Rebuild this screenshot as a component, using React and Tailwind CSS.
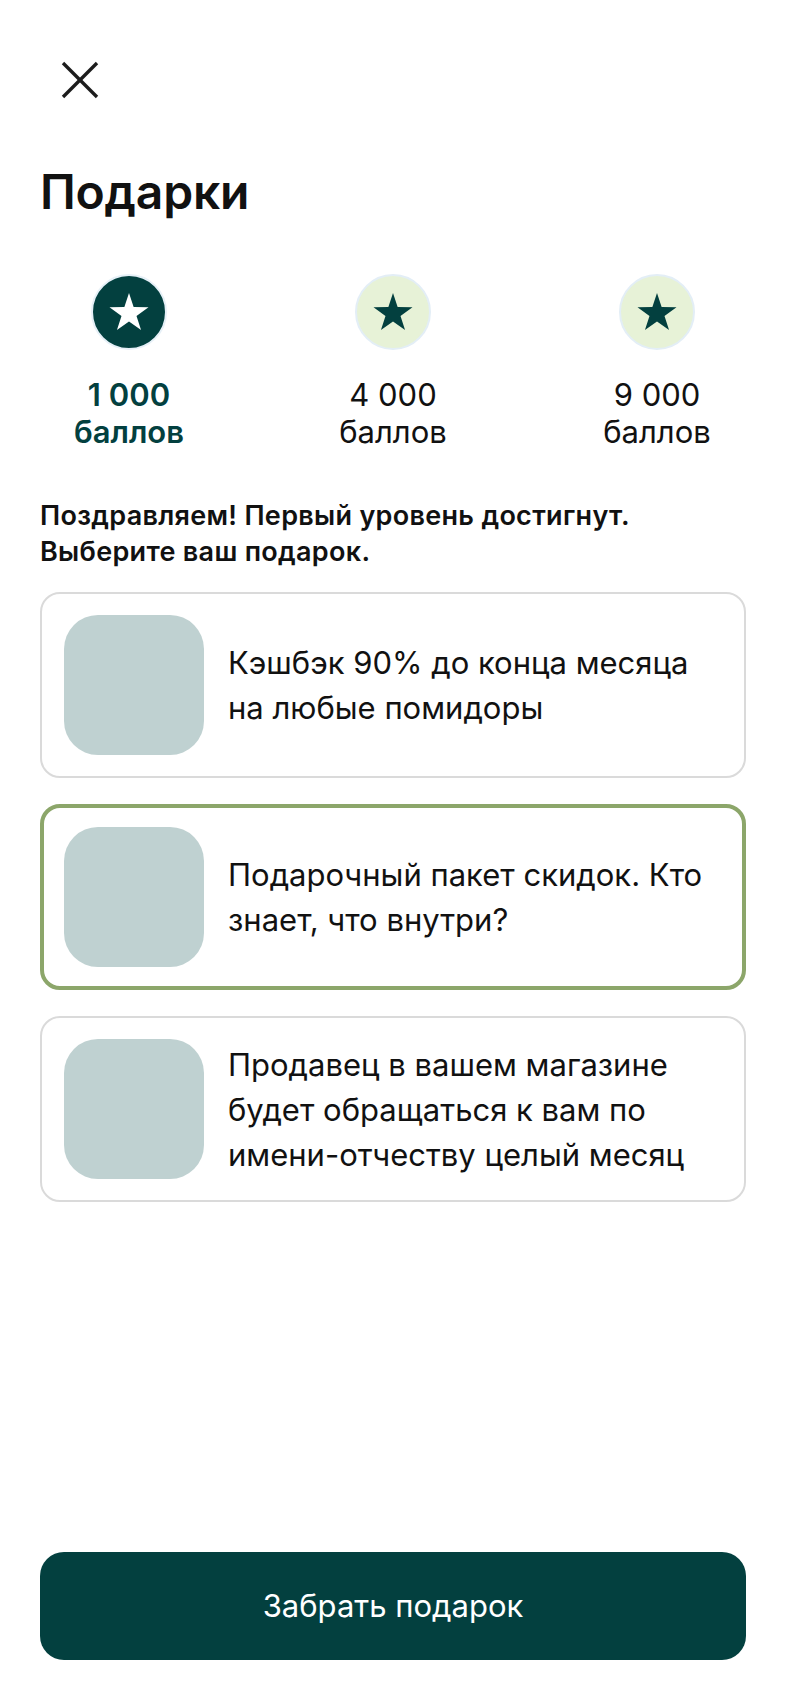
import React from 'react';

const levels = [
    { points: '1 000', active: true },
    { points: '4 000', active: false },
    { points: '9 000', active: false },
];

const gifts = [
    { id: 1, lines: ['Кэшбэк 90% до конца месяца', 'на любые помидоры'] },
    { id: 2, lines: ['Подарочный пакет скидок. Кто', 'знает, что внутри?'] },
    { id: 3, lines: ['Продавец в вашем магазине', 'будет обращаться к вам по', 'имени-отчеству целый месяц'] },
];

// five-point star, tip up
const starPoints = (R, r) => {
    const pts = [];
    for (let i = 0; i < 10; i++) {
        const rad = i % 2 === 0 ? R : r;
        const a = (Math.PI / 5) * i - Math.PI / 2;
        pts.push(`${(rad * Math.cos(a)).toFixed(2)},${(rad * Math.sin(a) + 1.5).toFixed(2)}`);
    }
    return pts.join(' ');
};

const Star = ({ color }) => (
    <svg width="42" height="42" viewBox="-21 -21 42 42">
        <polygon points={starPoints(20.5, 7.9)} fill={color} />
    </svg>
);

const App = () => {
    const selected = 2;

    return (
        <div className="min-h-screen w-full bg-white flex flex-col font-['Inter',sans-serif] text-[#111]">
            <div className="pt-[60px] pl-[60px]">
                <button className="block w-[40px] h-[40px]">
                    <svg width="40" height="40" viewBox="0 0 40 40">
                        <line x1="3" y1="3" x2="37" y2="37" stroke="#1c1c1c" strokeWidth="3.4" />
                        <line x1="37" y1="3" x2="3" y2="37" stroke="#1c1c1c" strokeWidth="3.4" />
                    </svg>
                </button>
            </div>

            <h1 className="mt-[64px] px-[40px] text-[48px] leading-[56px] font-semibold tracking-[-0.2px]">Подарки</h1>

            <div className="mt-[54px] px-[40px] flex justify-between">
                {levels.map(level => (
                    <div key={level.points} className="w-[178px] flex flex-col items-center">
                        <div
                            className={
                                level.active
                                    ? 'w-[76px] h-[76px] rounded-full bg-[#03403f] border-2 border-[#e6f0f7] flex items-center justify-center'
                                    : 'w-[76px] h-[76px] rounded-full bg-[#e7f2d7] border-2 border-[#e3eef6] flex items-center justify-center'
                            }
                        >
                            <Star color={level.active ? '#ffffff' : '#03403f'} />
                        </div>
                        <div
                            className={
                                level.active
                                    ? 'mt-[26px] text-center text-[31px] leading-[37px] font-semibold text-[#03403f]'
                                    : 'mt-[26px] text-center text-[31px] leading-[37px] font-normal text-[#111]'
                            }
                        >
                            {level.points}
                            <br />
                            баллов
                        </div>
                    </div>
                ))}
            </div>

            <p className="mt-[48px] px-[40px] text-[27px] leading-[36px] font-semibold tracking-[0.3px]">
                Поздравляем! Первый уровень достигнут.
                <br />
                Выберите ваш подарок.
            </p>

            <div className="mt-[22px] px-[40px] flex flex-col gap-[26px]">
                {gifts.map(gift => (
                    <div
                        key={gift.id}
                        className={
                            gift.id === selected
                                ? 'h-[186px] rounded-[20px] border-4 border-[#8ca66a] pl-[20px] pr-[20px] flex items-center gap-[24px]'
                                : 'h-[186px] rounded-[20px] border-2 border-[#dadada] pl-[22px] pr-[22px] flex items-center gap-[24px]'
                        }
                    >
                        <div className="w-[140px] h-[140px] shrink-0 rounded-[34px] bg-[#bfd1d1]" />
                        <p className="text-[31px] leading-[45px] whitespace-nowrap">
                            {gift.lines.map((line, i) => (
                                <React.Fragment key={i}>
                                    {i > 0 && <br />}
                                    {line}
                                </React.Fragment>
                            ))}
                        </p>
                    </div>
                ))}
            </div>

            <div className="flex-1" />

            <div className="px-[40px] pb-[44px] pt-[40px]">
                <button className="w-full h-[108px] rounded-[24px] bg-[#03403f] text-white text-[31px] font-normal">
                    Забрать подарок
                </button>
            </div>
        </div>
    );
};

export default App;
